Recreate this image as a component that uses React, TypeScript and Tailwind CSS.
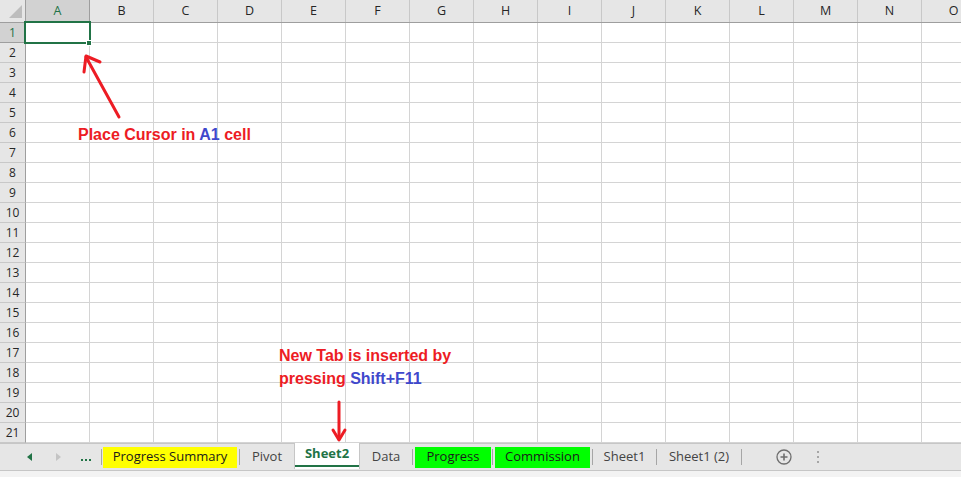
import React from "react";

const cols = ["A", "B", "C", "D", "E", "F", "G", "H", "I", "J", "K", "L", "M", "N", "O"];
const rows = Array.from({ length: 21 }, (_, i) => i + 1);

function Separator() {
  return <div className="h-[16px] w-px self-center bg-[#a6a6a6]" />;
}

export default function App() {
  return (
    <div className="relative h-[477px] w-[961px] overflow-hidden bg-white font-['Open_Sans','Liberation_Sans',sans-serif] text-[#262626]">
      {/* column headers */}
      <div className="flex h-[23px] border-b border-[#9e9e9e] bg-[#e6e6e6]">
        <div className="relative w-[26px] shrink-0 border-r border-[#9e9e9e]">
          <svg className="absolute left-[9px] top-[5px]" width="14" height="14" viewBox="0 0 14 14">
            <polygon points="13,0 13,13 0,13" fill="#bdbdbd" />
          </svg>
        </div>
        {cols.map((c, i) => (
          <div
            key={c}
            className={[
              "flex w-[64px] shrink-0 items-center justify-center border-r text-[12.5px]",
              i === 0
                ? "border-[#9e9e9e] bg-[#d2d2d2] text-[#217346]"
                : "border-[#c8c8c8]",
            ].join(" ")}
          >
            {c}
          </div>
        ))}
      </div>

      {/* grid rows */}
      {rows.map((r) => (
        <div key={r} className="flex h-[20px]">
          <div
            className={[
              "flex w-[26px] shrink-0 items-center justify-center border-r border-b border-[#9e9e9e] text-[12px]",
              r === 1 ? "bg-[#d2d2d2] text-[#217346]" : "bg-[#e6e6e6] border-b-[#c8c8c8]",
            ].join(" ")}
          >
            {r}
          </div>
          {cols.map((c) => (
            <div key={c} className="w-[64px] shrink-0 border-r border-b border-[#d4d4d4]" />
          ))}
        </div>
      ))}

      {/* sheet tab bar */}
      <div className="flex h-[28px] border-y border-[#c6c6c6] bg-[#e6e6e6] text-[13px]">
        <div className="flex w-[101px] shrink-0 items-center">
          <div className="ml-[18px] flex w-[22px] justify-center">
            <svg width="5" height="8" viewBox="0 0 5 8">
              <polygon points="5,0 5,8 0,4" fill="#217346" />
            </svg>
          </div>
          <div className="ml-[7px] flex w-[22px] justify-center">
            <svg width="5" height="8" viewBox="0 0 5 8">
              <polygon points="0,0 0,8 5,4" fill="#c4c4c4" />
            </svg>
          </div>
          <div className="ml-[6px] flex w-[22px] items-end justify-center gap-[2px] pt-[5px]">
            <span className="h-[2px] w-[2px] bg-[#217346]" />
            <span className="h-[2px] w-[2px] bg-[#217346]" />
            <span className="h-[2px] w-[2px] bg-[#217346]" />
          </div>
        </div>
        <Separator />
        <div className="ml-px flex h-[21px] w-[134px] shrink-0 items-center justify-center self-center bg-[#ffff00] text-[#1a1a1a]">
          Progress Summary
        </div>
        <div className="w-[2px] shrink-0" />
        <Separator />
        <div className="flex w-[54px] shrink-0 items-center justify-center text-[#444]">Pivot</div>
        <div className="-mt-px flex h-[26px] w-[66px] shrink-0 flex-col border-x border-[#c6c6c6] bg-white">
          <div className="flex flex-1 items-center justify-center font-bold text-[#217346]">Sheet2</div>
          <div className="mb-[2px] h-[2px] bg-[#217346]" />
        </div>
        <div className="flex w-[52px] shrink-0 items-center justify-center text-[#444]">Data</div>
        <Separator />
        <div className="ml-[2px] flex h-[21px] w-[76px] shrink-0 items-center justify-center self-center bg-[#00ff00] text-[#1a1a1a]">
          Progress
        </div>
        <div className="w-px shrink-0" />
        <Separator />
        <div className="ml-[2px] flex h-[21px] w-[95px] shrink-0 items-center justify-center self-center bg-[#00ff00] text-[#1a1a1a]">
          Commission
        </div>
        <div className="w-[2px] shrink-0" />
        <Separator />
        <div className="flex w-[63px] shrink-0 items-center justify-center text-[#444]">Sheet1</div>
        <Separator />
        <div className="flex w-[84px] shrink-0 items-center justify-center text-[#444]">Sheet1 (2)</div>
        <Separator />
        <div className="ml-[34px] flex items-center">
          <svg width="16" height="16" viewBox="0 0 16 16">
            <circle cx="8" cy="8" r="7" fill="none" stroke="#6e6e6e" strokeWidth="1.3" />
            <path d="M8 4.5v7M4.5 8h7" stroke="#6e6e6e" strokeWidth="1.6" />
          </svg>
        </div>
        <div className="ml-[25px] flex flex-col items-center justify-center gap-[3px]">
          <span className="h-[2px] w-[2px] bg-[#a6a6a6]" />
          <span className="h-[2px] w-[2px] bg-[#a6a6a6]" />
          <span className="h-[2px] w-[2px] bg-[#a6a6a6]" />
        </div>
      </div>
      <div className="h-[6px] bg-[#f3f3f3]" />

      {/* active cell A1 */}
      <div className="absolute left-[24px] top-[21px] h-[23px] w-[67px] border-2 border-[#217346]" />
      <div className="absolute left-[86px] top-[40px] h-[6px] w-[6px] border border-white bg-[#217346]" />

      {/* annotations */}
      <svg className="pointer-events-none absolute inset-0" width="961" height="477" viewBox="0 0 961 477">
        <g stroke="#ed1c24" strokeWidth="3" fill="none" strokeLinecap="round" strokeLinejoin="round">
          <path d="M119 117 L86 57" />
          <path d="M100 62 L86 56 L84 72" />
          <path d="M339 402 L339 439" />
          <path d="M333 430 L339 440 L345 430" />
        </g>
      </svg>
      <div className="absolute left-[78px] top-[125px] font-['Liberation_Sans',Arial,sans-serif] text-[16px] leading-[20px] font-bold text-[#ed1c24]">
        Place Cursor in <span className="text-[#3f48cc]">A1</span> cell
      </div>
      <div className="absolute left-[279px] top-[344px] font-['Liberation_Sans',Arial,sans-serif] text-[16px] leading-[23px] font-bold text-[#ed1c24]">
        <div>New Tab is inserted by</div>
        <div>
          pressing <span className="text-[#3f48cc]">Shift+F11</span>
        </div>
      </div>
    </div>
  );
}
